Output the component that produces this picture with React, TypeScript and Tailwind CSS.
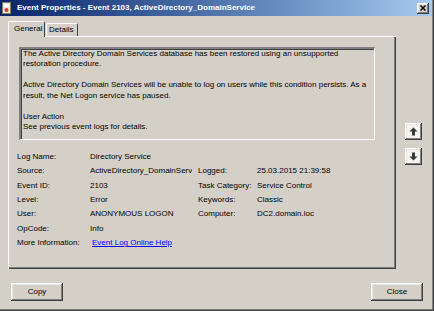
import React from "react";

const raised =
  "shadow-[inset_-1px_-1px_#404040,inset_1px_1px_#ffffff,inset_-2px_-2px_#808080,inset_2px_2px_#e8e6e0]";

function ArrowBtn({ down }: { down?: boolean }) {
  return (
    <div className={`w-[17px] h-[17px] bg-[#f3f2ee] flex items-center justify-center ${raised}`}>
      <svg width="9" height="9" viewBox="0 0 9 9" className={down ? "rotate-180" : ""}>
        <polygon points="4.5,0.5 8.5,4.5 6,4.5 6,8.5 3,8.5 3,4.5 0.5,4.5" fill="#3a3a3a" />
      </svg>
    </div>
  );
}

function Row({ label, value, rlabel, rvalue, link }: { label: string; value: string; rlabel?: string; rvalue?: string; link?: boolean }) {
  return (
    <div className="flex h-[14.33px] items-center whitespace-nowrap">
      <div className="w-[73px]">{label}</div>
      <div className="w-[102px] overflow-hidden">
        {link ? <span className="ml-[2px] text-[#0000ff] underline">{value}</span> : value}
      </div>
      {rlabel ? (
        <>
          <div className="w-[59px] ml-[6px]">{rlabel}</div>
          <div>{rvalue}</div>
        </>
      ) : null}
    </div>
  );
}

export default function App() {
  return (
    <div className="w-[434px] h-[311px] bg-[#d4d0c8] flex flex-col pr-[2px] pb-[2px] shadow-[inset_-1px_-1px_#404040,inset_-2px_-2px_#808080] font-['Liberation_Sans',Arial,sans-serif] text-[8px] text-black overflow-hidden">
      {/* title bar */}
      <div className="h-[16px] flex items-center bg-gradient-to-r from-[#0a246a] to-[#a6caf0] pl-[2px] pr-[3px]">
        <svg width="9" height="12" viewBox="0 0 9 12" className="shrink-0">
          <rect x="0.5" y="0.5" width="8" height="11" fill="#e8e4d8" stroke="#8a7f6a" />
          <rect x="2" y="2" width="5" height="3" fill="#ffffff" />
          <circle cx="4.5" cy="8" r="2" fill="#d83a2a" />
        </svg>
        <div className="ml-[6px] text-white font-bold text-[8px] whitespace-nowrap">
          Event Properties - Event 2103, ActiveDirectory_DomainService
        </div>
        <div className="flex-1" />
        <div className={`w-[12px] h-[11px] bg-[#d4d0c8] flex items-center justify-center ${raised}`}>
          <svg width="6" height="6" viewBox="0 0 6 6">
            <path d="M0.5 0.5 L5.5 5.5 M5.5 0.5 L0.5 5.5" stroke="#000" strokeWidth="1.5" />
          </svg>
        </div>
      </div>

      {/* body */}
      <div className="flex mt-[5px] ml-[8px]">
        <div className="flex flex-col">
          {/* tabs */}
          <div className="flex items-end h-[15px]">
            <div className="relative z-10 -mb-px h-[16px] w-[37px] bg-[#d4d0c8] border-t border-l border-white border-r border-r-[#404040] rounded-t-[2px] flex items-center pl-[5px] pb-[1px]">
              General
            </div>
            <div className="h-[13px] w-[32px] ml-[1px] border-t border-l border-white border-r border-r-[#404040] rounded-t-[2px] flex items-center pl-[2px]">
              Details
            </div>
          </div>
          {/* panel */}
          <div className="w-[388px] h-[233px] border-t border-l border-white shadow-[inset_-1px_-1px_#404040,inset_-2px_-2px_#808080] pl-[10px] pt-[10px]">
            <div className="w-[356px] h-[93px] bg-[#d4d0c8] border-t-2 border-l-2 border-t-[#808080] border-l-[#808080] border-b border-r border-b-white border-r-white shadow-[inset_1px_1px_#404040] pl-[2px] leading-[10.43px]">
              <div>The Active Directory Domain Services database has been restored using an unsupported</div>
              <div>restoration procedure.</div>
              <div>&nbsp;</div>
              <div>Active Directory Domain Services will be unable to log on users while this condition persists. As a</div>
              <div>result, the Net Logon service has paused.</div>
              <div>&nbsp;</div>
              <div>User Action</div>
              <div>See previous event logs for details.</div>
            </div>
            <div className="mt-[10px] -ml-[2px]">
              <Row label="Log Name:" value="Directory Service" />
              <Row label="Source:" value="ActiveDirectory_DomainService" rlabel="Logged:" rvalue="25.03.2015 21:39:58" />
              <Row label="Event ID:" value="2103" rlabel="Task Category:" rvalue="Service Control" />
              <Row label="Level:" value="Error" rlabel="Keywords:" rvalue="Classic" />
              <Row label="User:" value="ANONYMOUS LOGON" rlabel="Computer:" rvalue="DC2.domain.loc" />
              <Row label="OpCode:" value="Info" />
              <Row label="More Information:" value="Event Log Online Help" link />
            </div>
          </div>
        </div>
        {/* arrows */}
        <div className="flex flex-col gap-[8px] ml-[9px] pt-[102px]">
          <ArrowBtn />
          <ArrowBtn down />
        </div>
      </div>

      {/* bottom buttons */}
      <div className="flex justify-between mt-[14px] ml-[11px] mr-[9px]">
        <div className={`w-[52px] h-[18px] flex items-center justify-center ${raised}`}>Copy</div>
        <div className={`w-[52px] h-[18px] flex items-center justify-center ${raised}`}>Close</div>
      </div>
    </div>
  );
}
